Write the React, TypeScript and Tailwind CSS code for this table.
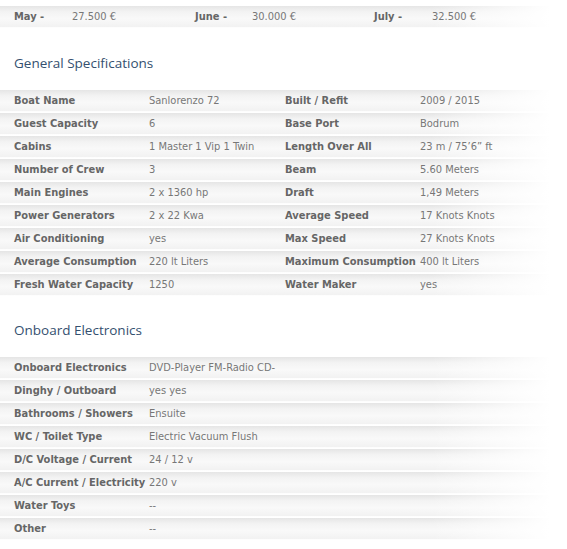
import React from 'react'

const PRICES = [
  { month: 'May -', price: '27.500 €' },
  { month: 'June -', price: '30.000 €' },
  { month: 'July -', price: '32.500 €' },
]

const GENERAL: [string, string, string, string][] = [
  ['Boat Name', 'Sanlorenzo 72', 'Built / Refit', '2009 / 2015'],
  ['Guest Capacity', '6', 'Base Port', 'Bodrum'],
  ['Cabins', '1 Master 1 Vip 1 Twin', 'Length Over All', '23 m / 75’6” ft'],
  ['Number of Crew', '3', 'Beam', '5.60 Meters'],
  ['Main Engines', '2 x 1360 hp', 'Draft', '1,49 Meters'],
  ['Power Generators', '2 x 22 Kwa', 'Average Speed', '17 Knots Knots'],
  ['Air Conditioning', 'yes', 'Max Speed', '27 Knots Knots'],
  ['Average Consumption', '220 lt Liters', 'Maximum Consumption', '400 lt Liters'],
  ['Fresh Water Capacity', '1250', 'Water Maker', 'yes'],
]

const ELECTRONICS: [string, string][] = [
  ['Onboard Electronics', 'DVD-Player FM-Radio CD-'],
  ['Dinghy / Outboard', 'yes yes'],
  ['Bathrooms / Showers', 'Ensuite'],
  ['WC / Toilet Type', 'Electric Vacuum Flush'],
  ['D/C Voltage / Current', '24 / 12 v'],
  ['A/C Current / Electricity', '220 v'],
  ['Water Toys', '--'],
  ['Other', '--'],
]

// shaded row: vertical bevel, fading out to white on the right
const rowBg =
  'bg-[image:linear-gradient(to_right,rgba(255,255,255,0)_76%,#fff_97%),linear-gradient(to_bottom,#e5e5e5_0%,#f3f3f3_25%,#f9f9f9_55%,#f2f2f2_90%,#fff_94%,#fff_100%)]'

function Label({ children }: { children: React.ReactNode }) {
  return <div className="pl-[14px] whitespace-nowrap font-bold text-[#666]">{children}</div>
}

function Value({ children }: { children: React.ReactNode }) {
  return <div className="pl-[14px] whitespace-nowrap text-[#777]">{children}</div>
}

function Heading({ children }: { children: React.ReactNode }) {
  return (
    <h2 className="pl-[14px] text-[13.5px] leading-[18px] text-[#34506f] font-['Open_Sans',sans-serif]">
      {children}
    </h2>
  )
}

export default function App() {
  return (
    <div className="w-[567px] h-[549px] overflow-hidden bg-white pt-[6px] font-['DejaVu_Sans_Condensed','DejaVu_Sans',sans-serif] text-[11px]">
      {/* price row */}
      <div className={`grid grid-cols-[72px_109px_71px_108px_72px_108px] h-[23px] items-center w-[567px] ${rowBg}`}>
        {PRICES.map(p => (
          <React.Fragment key={p.month}>
            <Label>{p.month}</Label>
            <div className="whitespace-nowrap text-[#777]">{p.price}</div>
          </React.Fragment>
        ))}
      </div>

      <div className="mt-[25px] mb-[18px]">
        <Heading>General Specifications</Heading>
      </div>

      <div className="flex flex-col">
        {GENERAL.map(r => (
          <div key={r[0]} className={`grid grid-cols-[135px_136px_135px_161px] h-[23px] items-center ${rowBg}`}>
            <Label>{r[0]}</Label>
            <Value>{r[1]}</Value>
            <Label>{r[2]}</Label>
            <Value>{r[3]}</Value>
          </div>
        ))}
      </div>

      <div className="mt-[24px] mb-[18px]">
        <Heading>Onboard Electronics</Heading>
      </div>

      <div className="flex flex-col">
        {ELECTRONICS.map(r => (
          <div key={r[0]} className={`grid grid-cols-[135px_432px] h-[23px] items-center ${rowBg}`}>
            <Label>{r[0]}</Label>
            <Value>{r[1]}</Value>
          </div>
        ))}
      </div>
    </div>
  )
}
